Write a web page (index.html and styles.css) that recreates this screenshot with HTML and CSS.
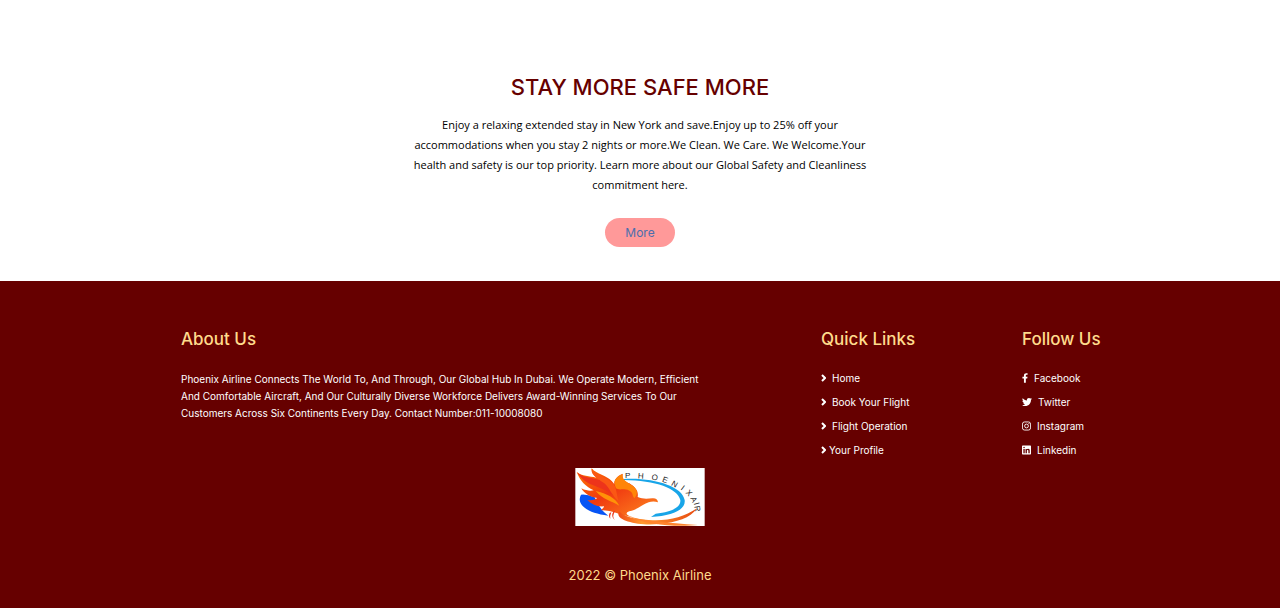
FILE: index.html
```html
<!DOCTYPE html>
<html lang="en">
<head>
<meta charset="utf-8">
<meta name="viewport" content="width=device-width, initial-scale=1">
<title>Phoenix Airline</title>
<link rel="stylesheet" href="styles.css">
</head>
<body>
<main class="offer">
  <h1 class="offer-title">STAY MORE SAFE MORE</h1>
  <p class="offer-text">Enjoy a relaxing extended stay in New York and save.Enjoy up to 25% off your<br>accommodations when you stay 2 nights or more.We Clean. We Care. We Welcome.Your<br>health and safety is our top priority. Learn more about our Global Safety and Cleanliness<br>commitment here.</p>
  <a class="offer-more" href="#">More</a>
</main>
<footer class="footer">
  <div class="footer-columns">
    <section>
      <h2 class="footer-title">About Us</h2>
      <p class="about-text">Phoenix Airline Connects The World To, And Through, Our Global Hub In Dubai. We Operate Modern, Efficient<br>And Comfortable Aircraft, And Our Culturally Diverse Workforce Delivers Award-Winning Services To Our<br>Customers Across Six Continents Every Day. Contact Number:011-10008080</p>
    </section>
    <nav>
      <h2 class="footer-title">Quick Links</h2>
      <ul class="links">
        <li><a href="#"><svg class="chevron" viewBox="0 0 5 8"><path d="M1 1l3 3-3 3"/></svg>Home</a></li>
        <li><a href="#"><svg class="chevron" viewBox="0 0 5 8"><path d="M1 1l3 3-3 3"/></svg>Book Your Flight</a></li>
        <li><a href="#"><svg class="chevron" viewBox="0 0 5 8"><path d="M1 1l3 3-3 3"/></svg>Flight Operation</a></li>
        <li><a class="tight" href="#"><svg class="chevron" viewBox="0 0 5 8"><path d="M1 1l3 3-3 3"/></svg>Your Profile</a></li>
      </ul>
    </nav>
    <section>
      <h2 class="footer-title">Follow Us</h2>
      <ul class="links">
        <li><a href="#"><svg class="icon narrow" viewBox="0 0 320 512"><path d="M279.14 288l14.22-92.66h-88.91v-60.13c0-25.35 12.42-50.06 52.24-50.06h40.42V6.26S260.43 0 225.36 0c-73.22 0-121.08 44.38-121.08 124.72v70.62H22.89V288h81.39v224h100.17V288z"/></svg>Facebook</a></li>
        <li><a href="#"><svg class="icon wide" viewBox="0 0 512 512"><path d="M459.37 151.716c.325 4.548.325 9.097.325 13.645 0 138.72-105.583 298.558-298.558 298.558-59.452 0-114.68-17.219-161.137-47.106 8.447.974 16.568 1.299 25.34 1.299 49.055 0 94.213-16.568 130.274-44.832-46.132-.975-84.792-31.188-98.112-72.772 6.498.974 12.995 1.624 19.818 1.624 9.421 0 18.843-1.3 27.614-3.573-48.081-9.747-84.143-51.98-84.143-102.985v-1.299c13.969 7.797 30.214 12.67 47.431 13.319-28.264-18.843-46.781-51.005-46.781-87.391 0-19.492 5.197-37.36 14.294-52.954 51.655 63.675 129.3 105.258 216.365 109.807-1.624-7.797-2.599-15.918-2.599-24.04 0-57.828 46.782-104.934 104.934-104.934 30.213 0 57.502 12.67 76.67 33.137 23.715-4.548 46.456-13.32 66.599-25.34-7.798 24.366-24.366 44.833-46.132 57.827 21.117-2.273 41.584-8.122 60.426-16.243-14.292 20.791-32.161 39.308-52.628 54.253z"/></svg>Twitter</a></li>
        <li><a href="#"><svg class="icon" viewBox="0 32 448 448"><rect class="ring" x="22" y="54" width="404" height="404" rx="105"/><circle class="ring" cx="224" cy="256" r="94"/><circle cx="344" cy="136" r="27"/></svg>Instagram</a></li>
        <li><a href="#"><svg class="icon" viewBox="0 32 448 448"><path d="M416 32H31.9C14.3 32 0 46.5 0 64.3v383.4C0 465.5 14.3 480 31.9 480H416c17.6 0 32-14.5 32-32.3V64.3c0-17.8-14.4-32.3-32-32.3zM135.4 416H69V202.2h66.5V416zm-33.2-243c-21.3 0-38.5-17.3-38.5-38.5S80.900 96 102.200 96c21.200 0 38.500 17.300 38.500 38.500 0 21.300-17.200 38.500-38.500 38.500zm282.100 243h-66.400V312c0-24.800-.5-56.700-34.500-56.700-34.600 0-39.900 27-39.900 54.900V416h-66.400V202.200h63.700v29.200h.9c8.900-16.800 30.600-34.500 62.900-34.500 67.200 0 79.700 44.300 79.700 101.900V416z"/></svg>Linkedin</a></li>
      </ul>
    </section>
  </div>
  <svg class="logo" viewBox="0 0 388 174" role="img" aria-label="Phoenix Air">
    <defs>
      <linearGradient id="flame" x1="0" y1="0" x2="1" y2="1"><stop offset="0" stop-color="#ff7a00"/><stop offset=".45" stop-color="#f03a10"/><stop offset="1" stop-color="#ff8a20"/></linearGradient>
      <linearGradient id="tail" x1="0" x2="1"><stop offset="0" stop-color="#f04a15"/><stop offset=".3" stop-color="#ff9a30"/><stop offset="1" stop-color="#e84a10"/></linearGradient>
    </defs>
    <rect width="388" height="174" fill="#fff"/>
    <path d="M17 80C2 108 32 135 99 143C77 127 68 110 58 88Q35 78 17 80Z" fill="#0755f5"/>
    <path d="M146 33C235 28 321 55 328 96C332 124 295 143 227 147L241 137C291 132 317 117 315 96C309 62 240 37 146 36Z" fill="#18a5e8"/>
    <path d="M4 12C20 25 42 24 63 29C50 18 47 10 49 1C65 20 93 22 109 39C117 48 120 52 121 61C112 45 116 28 142 17C139 35 151 42 162 46C184 59 190 73 187 87C202 94 217 92 231 91C241 90 247 94 248 103C238 99 228 100 220 103C202 109 187 125 162 130C146 136 155 143 174 148C129 141 118 128 75 126C84 122 85 119 86 115C63 117 48 107 36 96C55 99 60 93 66 90C43 87 25 75 18 61C35 70 47 68 55 67C30 55 14 38 4 12Z" fill="url(#flame)"/>
    <path d="M5 13C29 35 67 26 97 48C111 60 119 73 126 91C98 69 79 61 59 54C35 46 18 35 5 13Z" fill="#ed341b"/>
    <path d="M49 2C61 24 95 26 113 46C125 60 123 81 130 100C106 79 103 58 86 45C66 31 50 23 49 2Z" fill="#fa5814"/>
    <path d="M122 61C113 40 119 28 142 18C138 36 156 43 172 53C188 66 188 78 177 91C169 80 174 73 162 68C146 60 130 68 122 61Z" fill="#ff8508"/>
    <path d="M61 69C95 77 119 89 132 113C108 99 83 95 61 69Z" fill="#ff9208"/>
    <path d="M132 130C113 155 185 175 251 168C306 163 344 151 365 121C324 149 277 160 219 156C178 154 142 145 132 130Z" fill="url(#tail)"/>
    <path d="M158 143C204 160 275 163 368 171C305 177 211 172 158 143Z" fill="#ff852d"/>
    <path d="M115 129Q105 145 118 156Q109 143 120 128M103 135Q98 145 105 152Q103 144 108 133" fill="#ed391b"/>
    <g class="logo-text">
      <text transform="translate(157 30)">P</text>
      <text transform="translate(196 32) rotate(4)">H</text>
      <text transform="translate(237 36) rotate(10)">O</text>
      <text transform="translate(267 43) rotate(20)">E</text>
      <text transform="translate(294 55) rotate(30)">N</text>
      <text transform="translate(317 66) rotate(38)">I</text>
      <text transform="translate(335 80) rotate(48)">X</text>
      <text transform="translate(348 98) rotate(65)">A</text>
      <text transform="translate(356 109) rotate(75)">I</text>
      <text transform="translate(358 123) rotate(80)">R</text>
    </g>
  </svg>
  <p class="copyright">2022 © Phoenix Airline</p>
</footer>
</body>
</html>
```
FILE: styles.css
```css
* { box-sizing: border-box; }
body, h1, h2, p, ul { margin: 0; padding: 0; }
body { font-family: Inter, "Open Sans", sans-serif; color: #000; background: #fff; }
a { text-decoration: none; color: inherit; }
ul { list-style: none; }

.offer { display: flex; flex-direction: column; align-items: center; padding: 67px 20px 34px; text-align: center; }
.offer-title { font-size: 22px; line-height: 40px; font-weight: 500; color: #600; }
.offer-text { margin-top: 8px; font-family: "Open Sans", sans-serif; font-size: 11px; line-height: 20px; }
.offer-more { margin-top: 23px; padding: 0 20px; border-radius: 15px; background: #f99; color: #4c6ead; font-size: 12px; line-height: 29px; }

.footer { display: flex; flex-direction: column; align-items: center; padding: 46px 20px 21px; background: #600; color: #fff; }
.footer-columns { display: grid; grid-template-columns: 1fr 101px 77px; gap: 100px; width: 100%; max-width: 918px; }
.footer-title { font-size: 17px; line-height: 24px; font-weight: 500; color: #ffdb8c; white-space: nowrap; }
.about-text { margin-top: 20px; font-size: 10px; line-height: 17px; white-space: nowrap; }
.links { margin-top: 15px; font-size: 10px; line-height: 24px; white-space: nowrap; }
.links a { display: flex; align-items: center; gap: 6px; }
.links .tight { gap: 3px; }
.chevron { width: 5px; height: 8px; fill: none; stroke: #fff; stroke-width: 2; }
.icon { width: 9px; height: 10px; fill: #fff; }
.icon.narrow { width: 6px; }
.icon.wide { width: 10px; }
.ring { fill: none; stroke: #fff; stroke-width: 44; }

.logo { display: block; width: 130px; height: 58px; margin-top: 6px; }
.logo-text { font-family: "Liberation Sans", sans-serif; font-size: 24px; fill: #222; text-anchor: middle; }
.copyright { margin-top: 37px; font-size: 13px; line-height: 24px; color: #ffdb8c; }
```
